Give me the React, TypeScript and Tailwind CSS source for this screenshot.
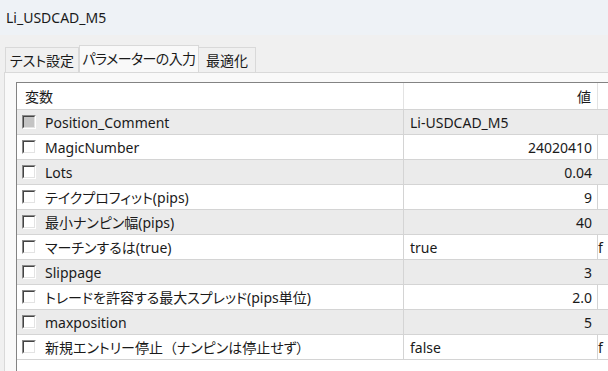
import React from "react";

type Row = {
  name: React.ReactNode;
  key: string;
  value: string;
  align: "left" | "right";
  extra?: string;
  disabled?: boolean;
  span?: boolean;
};

const rows: Row[] = [
  { key: "pc", name: "Position_Comment", value: "Li-USDCAD_M5", align: "left", disabled: true, span: true },
  { key: "mn", name: "MagicNumber", value: "24020410", align: "right" },
  { key: "lots", name: "Lots", value: "0.04", align: "right" },
  { key: "tp", name: "テイクプロフィット(pips)", value: "9", align: "right" },
  { key: "nanpin", name: "最小ナンピン幅(pips)", value: "40", align: "right" },
  { key: "martin", name: "マーチンするは(true)", value: "true", align: "left", extra: "false" },
  { key: "slip", name: "Slippage", value: "3", align: "right" },
  { key: "spread", name: "トレードを許容する最大スプレッド(pips単位)", value: "2.0", align: "right" },
  { key: "maxpos", name: "maxposition", value: "5", align: "right" },
  {
    key: "stop",
    name: (
      <>
        新規エントリー停止<span className="[font-feature-settings:normal]">（</span>ナンピンは停止せず）
      </>
    ),
    value: "false",
    align: "left",
    extra: "false",
  },
];

function CheckBox({ disabled }: { disabled?: boolean }) {
  return (
    <span className="flex h-[14px] w-[14px] shrink-0 border border-t-[#8a8a8a] border-l-[#8a8a8a] border-r-white border-b-white">
      <span
        className={
          "flex-1 border border-t-[#444] border-l-[#444] border-r-[#e3e3e3] border-b-[#e3e3e3] " +
          (disabled ? "bg-[#c4c4c4]" : "bg-white")
        }
      />
    </span>
  );
}

export default function App() {
  return (
    <div className="flex h-[371px] w-[608px] flex-col overflow-hidden bg-[#f0f0f0] text-[14px] text-[#1a1a1a] [font-family:'Noto_Sans','Noto_Sans_CJK_JP',sans-serif] [font-feature-settings:'palt']">
      {/* title */}
      <div className="flex h-[35px] shrink-0 items-center bg-[#eef2f6] pl-[6px] text-[14px]">
        Li_USDCAD_M5
      </div>

      {/* tabs */}
      <div className="flex h-[37px] shrink-0 items-end pl-[5px]">
        <div className="flex h-[25px] w-[74px] items-center justify-center whitespace-nowrap border border-b-0 border-[#d9d9d9] bg-[#f0f0f0]">
          テスト設定
        </div>
        <div className="flex h-[27px] w-[120px] items-center justify-center whitespace-nowrap border border-b-0 border-[#d9d9d9] bg-[#f9f9f9] pb-[1px] tracking-[-0.6px]">
          パラメーターの入力
        </div>
        <div className="flex h-[25px] w-[57px] items-center justify-center whitespace-nowrap border border-b-0 border-l-0 border-[#d9d9d9] bg-[#f0f0f0]">
          最適化
        </div>
      </div>

      {/* panel */}
      <div className="ml-[4px] flex flex-1 flex-col border-l border-t border-[#d9d9d9] bg-[#f9f9f9] pl-[11px] pt-[9px]">
        <div className="flex flex-1 flex-col border-l border-t border-[#838383] bg-white">
          {/* header */}
          <div className="flex h-[27px] shrink-0 border-b border-[#d4d4d4]">
            <div className="flex w-[386px] items-center pl-[8px]">変数</div>
            <div className="flex w-[194px] items-center justify-end border-l border-[#e3e3e3] pr-[6px]">値</div>
            <div className="flex-1 border-l border-[#e3e3e3]" />
          </div>

          {rows.map((r, i) => {
            const gray = i % 2 === 0;
            return (
              <div
                key={r.key}
                className={"flex h-[25px] shrink-0 border-b border-[#d4d4d4] " + (gray ? "bg-[#ebebeb]" : "bg-white")}
              >
                <div className="flex w-[386px] items-center pl-[5px]">
                  <CheckBox disabled={r.disabled} />
                  <span className="ml-[9px] whitespace-nowrap">{r.name}</span>
                </div>
                {r.span ? (
                  <div className="flex flex-1 items-center whitespace-nowrap border-l border-[#d4d4d4] pl-[6px]">
                    {r.value}
                  </div>
                ) : (
                  <>
                    <div
                      className={
                        "flex w-[194px] items-center whitespace-nowrap border-l border-[#d4d4d4] " +
                        (r.align === "right" ? "justify-end pr-[5px]" : "pl-[6px]")
                      }
                    >
                      {r.value}
                    </div>
                    <div
                      className={
                        "flex w-[10px] items-center overflow-hidden whitespace-nowrap " +
                        (gray ? "" : "border-l border-[#d4d4d4]")
                      }
                    >
                      {r.extra ? r.extra.charAt(0) : ""}
                    </div>
                  </>
                )}
              </div>
            );
          })}
        </div>
      </div>
    </div>
  );
}
